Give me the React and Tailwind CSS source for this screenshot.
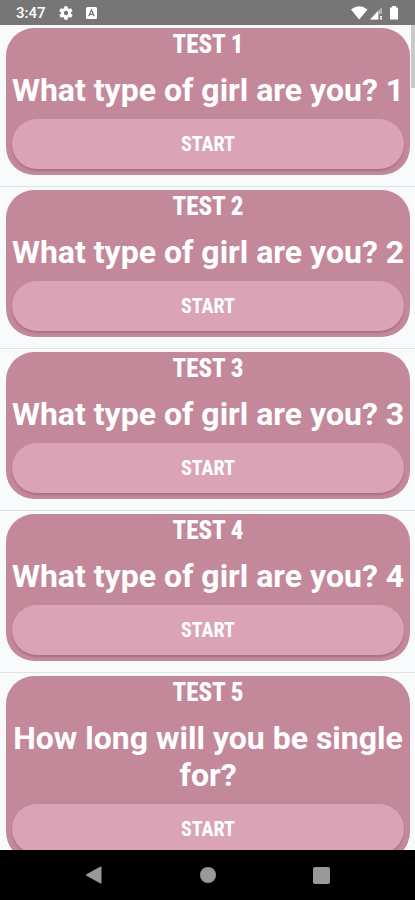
import React from "react";

const tests = [
  "What type of girl are you? 1",
  "What type of girl are you? 2",
  "What type of girl are you? 3",
  "What type of girl are you? 4",
  "How long will you be single for?",
];

function StatusBar() {
  return (
    <header className="flex h-[25px] shrink-0 items-center justify-between bg-[#767676] px-4 text-white">
      <div className="flex items-center gap-3">
        <span className="text-[15px] leading-6 font-medium">3:47</span>
        <svg className="size-4" viewBox="0 0 24 24" fill="#fff" aria-hidden="true">
          <path d="M19.4 13c.1-.3.1-.6.1-1s0-.7-.1-1l2.2-1.7c.2-.2.2-.4.1-.6l-2-3.5c-.1-.2-.4-.3-.6-.2l-2.6 1c-.5-.4-1.1-.7-1.7-1l-.4-2.6c0-.2-.2-.4-.5-.4h-4c-.2 0-.5.2-.5.4l-.4 2.6c-.6.3-1.2.6-1.7 1l-2.6-1c-.2-.1-.5 0-.6.2l-2 3.5c-.1.2-.1.5.1.6L4.5 11c0 .3-.1.7-.1 1s0 .7.1 1l-2.2 1.7c-.2.1-.2.4-.1.6l2 3.5c.1.2.4.3.6.2l2.6-1c.5.4 1.1.7 1.7 1l.4 2.6c0 .2.3.4.5.4h4c.3 0 .5-.2.5-.4l.4-2.6c.6-.3 1.2-.6 1.7-1l2.6 1c.2.1.5 0 .6-.2l2-3.5c.1-.2.1-.5-.1-.6L19.4 13zM12 15.3a3.3 3.3 0 1 1 0-6.6 3.3 3.3 0 0 1 0 6.6z" />
        </svg>
        <svg className="h-3 w-[11px]" viewBox="0 0 11 12" aria-hidden="true">
          <rect width="11" height="12" rx="1.5" fill="#fff" />
          <path d="M2.8 9.300 5.5 3l2.700 6.300M3.700 7.300h3.600" fill="none" stroke="#767676" strokeWidth="1.3" />
        </svg>
      </div>
      <svg className="mr-px h-4 w-12" viewBox="0 0 48 16" fill="#fff" aria-hidden="true">
        <path d="M1 4.500Q9-2 17.500 4.500L9.200 14.500z" />
        <path d="M20 14.500 32 2v7h-3v5.500z" opacity=".45" />
        <path d="M20 14.500 28 6v8.500zM30 11h2v1.500h-2zM30 13h2v1.500h-2z" />
        <path d="M42 1h4v1.500h2v12h-8V2.500h2z" />
      </svg>
    </header>
  );
}

function TestItem({ number, title }) {
  return (
    <li className="border-b border-[#dfe3e4] pt-[3px] pr-[5px] pb-[11px] pl-1.5">
      <article className="rounded-[28px] bg-[#c4889b] px-1.5 pb-1.5 text-center text-white">
        <h2 className="mb-[11px] font-['Roboto_Condensed','Liberation_Sans_Narrow',Roboto,sans-serif] text-[25px] leading-[33px] font-extrabold">
          TEST {number}
        </h2>
        <p className="-mx-1 mb-2.5 text-[32px] leading-[37px] font-bold">{title}</p>
        <button
          type="button"
          className="block h-[50px] w-full rounded-full bg-[#dba4b6] font-['Roboto_Condensed','Liberation_Sans_Narrow',Roboto,sans-serif] text-xl font-bold shadow-[0_2px_2px_#a96f84]"
        >
          START
        </button>
      </article>
    </li>
  );
}

function NavigationBar() {
  return (
    <nav className="flex h-[50px] shrink-0 items-center justify-center gap-[90px] bg-black">
      <button type="button" aria-label="Back" className="flex size-6 items-center justify-center">
        <svg className="size-[18px]" viewBox="0 0 18 18" fill="#999">
          <path d="M1.5 8.2 15.500.6q1-.4 1 .6v15.600q0 1-1 .600L1.500 9.800Q.3 9 1.500 8.200z" />
        </svg>
      </button>
      <button type="button" aria-label="Home" className="flex size-6 items-center justify-center">
        <span className="size-4 rounded-full bg-[#999]" />
      </button>
      <button type="button" aria-label="Recent apps" className="flex size-6 items-center justify-center">
        <span className="size-[17px] rounded-[2px] bg-[#999]" />
      </button>
    </nav>
  );
}

export default function App() {
  return (
    <div className="flex h-screen flex-col overflow-hidden bg-[#f8fafb] font-[Roboto,sans-serif]">
      <StatusBar />
      <main className="relative min-h-0 flex-1 overflow-hidden">
        <ul>
          {tests.map((title, index) => (
            <TestItem key={index} number={index + 1} title={title} />
          ))}
        </ul>
        <div className="absolute top-0 right-0 h-[63px] w-1 bg-[#c8caca]" />
      </main>
      <NavigationBar />
    </div>
  );
}
